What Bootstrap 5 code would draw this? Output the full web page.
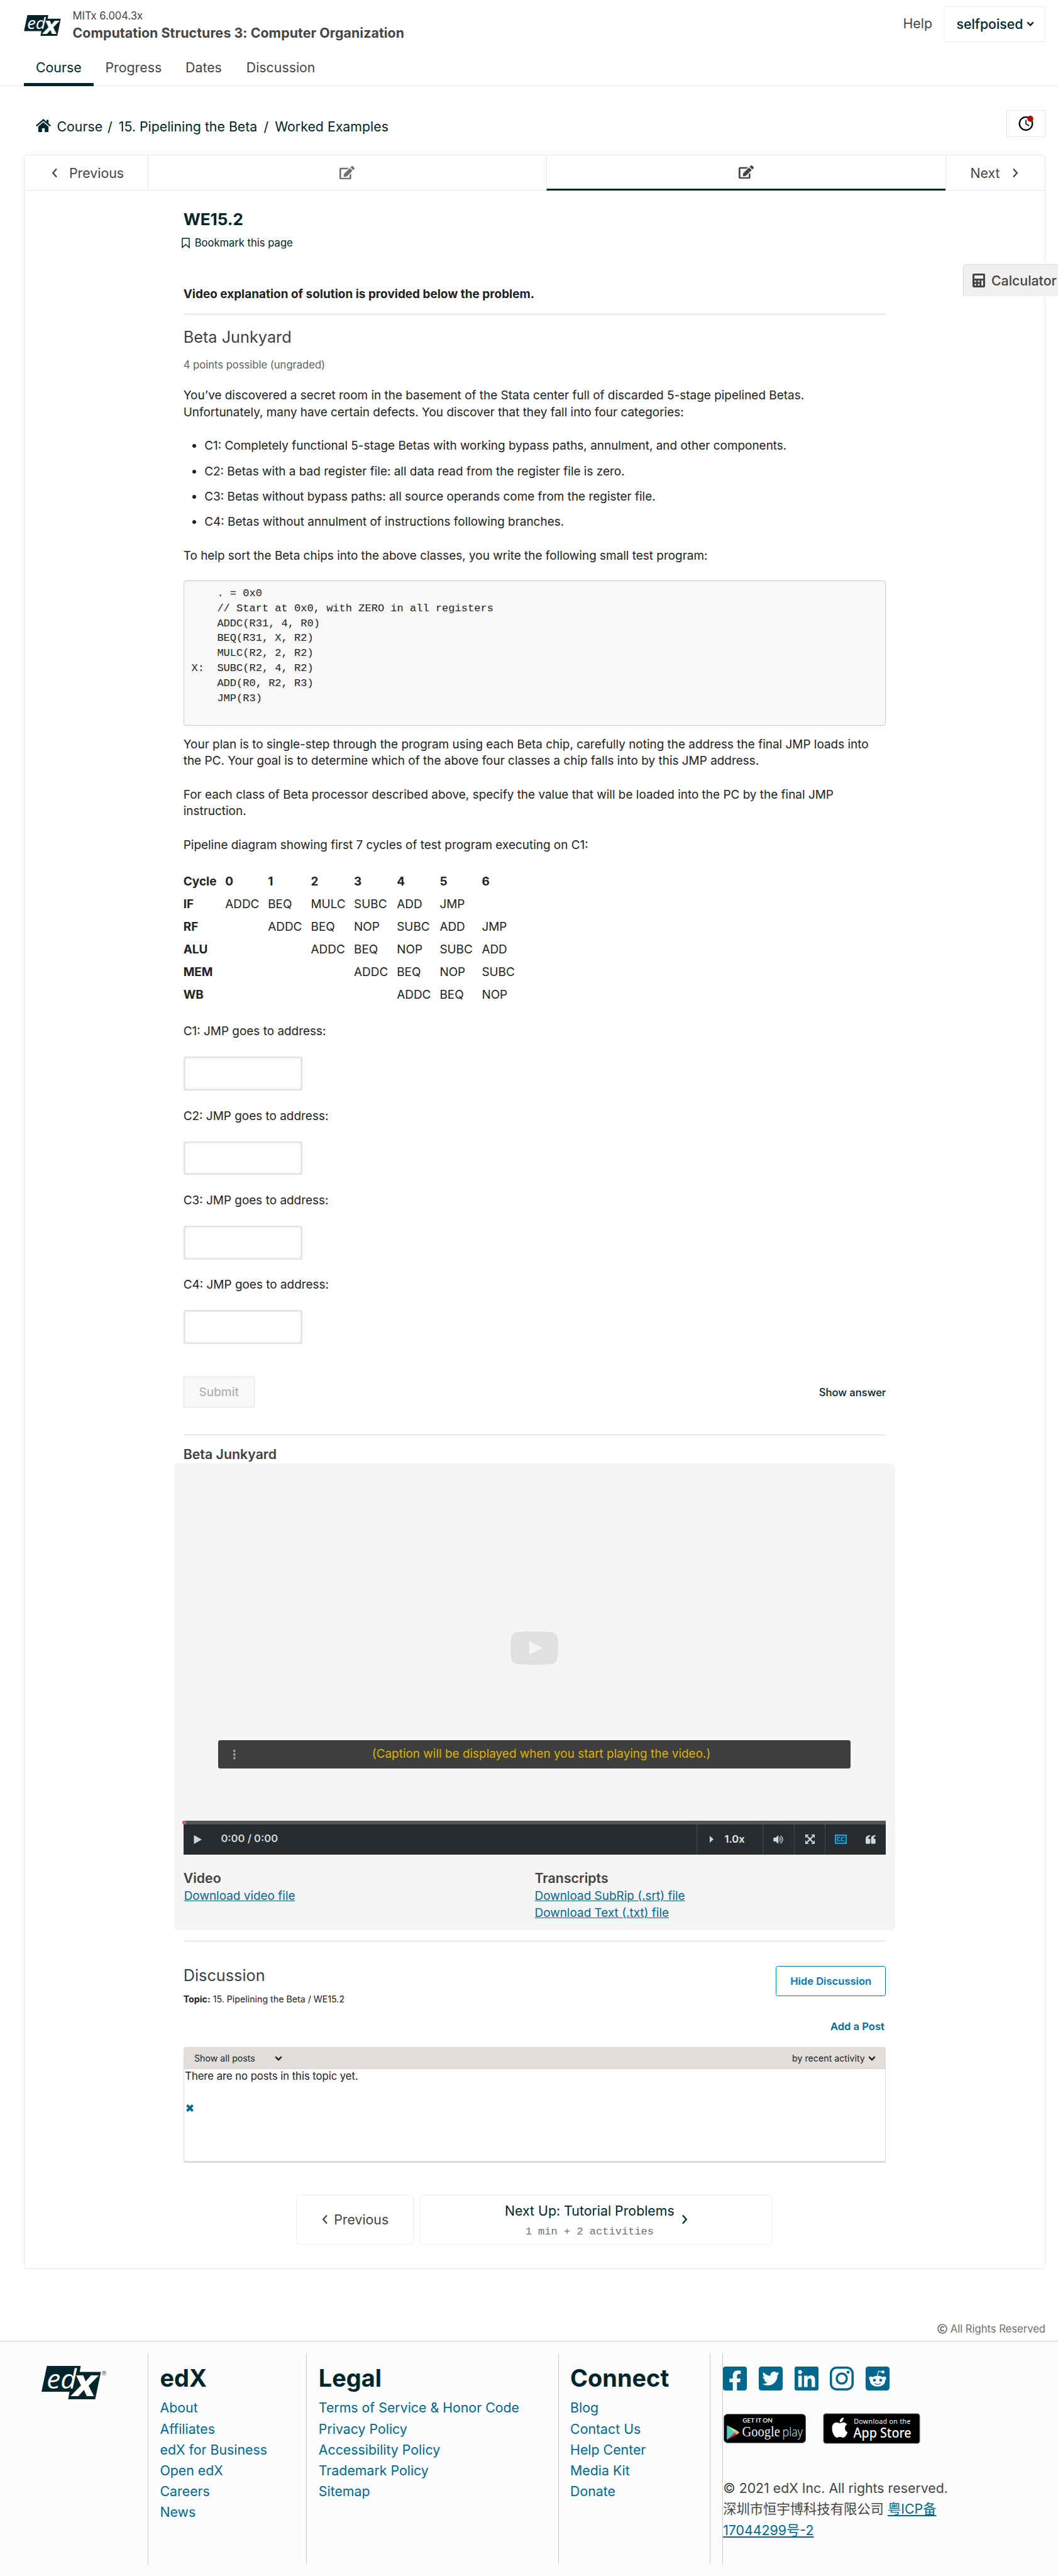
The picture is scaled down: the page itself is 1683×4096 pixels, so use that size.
<!DOCTYPE html>
<html lang="en">
<head>
<meta charset="utf-8">
<meta name="viewport" content="width=device-width, initial-scale=1">
<title>WE15.2 | Worked Examples | edX</title>
<link href="https://cdn.jsdelivr.net/npm/bootstrap@5.3.0/dist/css/bootstrap.min.css" rel="stylesheet">
<style>
:root{--ink:#00262b;--txt:#454545;--teal:#00688d;--line:#e7e7e7}
body{font-family:Inter,"Noto Sans CJK SC",sans-serif;font-size:18.95px;line-height:26.53px;color:#222;background:#fff;overflow-x:hidden;position:relative}
a{text-decoration:none;color:inherit}
svg{display:block;flex:none}
h1,h2,h3,p,ul{margin:0}
.topbar{height:137.4px;border-bottom:1px solid var(--line)}
.brandrow{height:77px;padding:0 20px 0 38px}
.crs{margin-left:18.5px}
.crs-num{font-size:16.58px;line-height:20px;margin-top:14.7px;color:var(--txt)}
.crs-title{font-size:21.32px;line-height:26px;margin-top:4px;font-weight:700;letter-spacing:.07px;color:var(--txt)}
.logo-s{margin-top:24px}
.help{font-size:21.32px;line-height:30px;color:var(--txt);margin:22.2px 18px 0 0}
.user{width:162px;height:57px;margin-top:9.5px;border:1px solid #ececec;font-size:21.32px;font-weight:500;color:var(--ink);gap:5px;padding-left:2px}
.tabs{padding-left:38px;height:60.4px}
.tabs a{font-size:21.32px;line-height:30px;padding:14.5px 18.95px 0;color:var(--txt);height:60.4px}
.tabs a:last-child{padding-left:20px}
.tabs a.on{color:var(--ink);border-bottom:5px solid var(--ink)}
.page{padding:37.9px 20px 0 38px}
.crumbs{font-size:21.32px;line-height:30px;color:var(--ink);padding:10.7px 0 0 18.9px;gap:10.1px;height:42.6px}
.clockbox{width:61.6px;height:42.6px;border:1px solid var(--line)}
.unit{margin-top:28.4px;height:3362.2px;border:1px solid var(--line);border-radius:4.7px}
.seq{height:56px;font-size:21.32px;color:var(--txt)}
.seq>*{border-bottom:1px solid var(--line)}
.seq .prv{width:195.6px;padding-left:43px;gap:18px}
.seq .nxt{width:158.5px;padding-left:39px;gap:19px;border-left:1px solid var(--line)}
.seq .tb{border-left:1px solid var(--line)}
.seq .tb.on{border-bottom:3px solid var(--ink)}
.col-main{width:1117.6px;margin:0 auto}
.unit h1{font-size:26.06px;line-height:32px;font-weight:700;color:var(--ink);margin-top:29.3px}
.bm{font-size:16.58px;line-height:24px;color:var(--ink);margin:9.8px 0 0 -3px;gap:8px}
.rule{height:1px;background:#d9d9d9}
.h-prob{font-size:25.27px;line-height:30px;font-weight:400;color:#3c4146}
.pts{font-size:16.58px;line-height:22px;margin-top:17.8px;color:#5e6469}
.cats{padding-left:33.5px;margin-top:26.9px}
.cats li{margin-bottom:13.74px}
.code{font-family:"Liberation Mono",monospace;font-size:17.05px;line-height:23.87px;background:#f8f8f8;border:1px solid #c8c8c8;border-radius:3.5px;height:231px;margin:26.4px 0 0;padding:7.4px 11.8px;color:#222;overflow:hidden}
.para{margin-top:26.8px}
.pipe{margin-top:27.3px;table-layout:fixed;width:540px;border-collapse:collapse}
.pipe th,.pipe td{height:36.06px;padding:0}
.pipe th{font-weight:700}
.ans{margin-top:26.5px}
.ans+.ans{margin-top:27.6px}
.ans input{display:block;width:189px;height:53.9px;border:2px solid #e0e0e0;border-radius:3.5px;box-shadow:inset 0 0 4px rgba(0,0,0,.12);margin-top:26.4px;background:#fff}
.actions{margin-top:52.2px}
.submit{width:113px;height:49px;border:1px solid #e2e2e2;background:#f9f9f9;color:#b1b1b1;font-size:18.95px;font-weight:500}
.show{font-size:16.58px;font-weight:500;color:var(--ink)}
.h-vid{font-size:21.32px;line-height:27px;font-weight:600;color:#414141}
.vid{margin:.7px -14.6px 0;height:741.5px;background:#f5f5f5;border-radius:6px;padding:0 14.6px}
.stage{height:567.4px;position:relative}
.stage .playbig{position:absolute;left:520.5px;top:267.2px}
.capt{position:absolute;left:55px;top:439.5px;width:1006.7px;height:45px;background:#3e3e3e;border-radius:3.5px;color:#d9b300;font-size:18.95px}
.capt svg{position:absolute;left:24px;top:15px}
.prog{height:6px;background:#4f595b;position:relative}
.prog i{position:absolute;left:-1.5px;top:0;width:6px;height:6px;border-radius:2px;background:#cb598d}
.ctl{height:48.6px;background:#282c2e;color:#cfd8dc;font-size:16.58px;font-weight:600}
.ctl .seg{border-left:1px dotted #62696b;height:48.6px}
.dl{font-size:18.95px;line-height:27.2px;padding-top:23.7px}
.dl a{color:var(--teal);text-decoration:underline;display:block}
.dl h3+a{margin-top:1.2px}
.btn-hide{width:175.3px;height:47.4px;border:1.2px solid #0075b4;border-radius:3.5px;color:#0075b4;font-size:16.58px;font-weight:600;background:#fff}
.topic{font-size:14.21px;line-height:20px;margin-top:12.7px}
.addp{font-size:16.58px;line-height:22px;font-weight:600;color:var(--teal);margin:22px 2.4px 0 0}
.posts{margin-top:22.3px;height:184.2px;border:1px solid #d9d9d9;border-bottom-width:3px;border-radius:3.5px;font-size:16.58px}
.posts .hd{height:33.6px;background:#e0dddb;border-bottom:1px solid #d9d9d9;font-size:14.21px;padding:1px 15.5px 0 16.2px}
.pager{margin:50.3px 0 0 179.7px;gap:8.9px;font-size:21.32px}
.nav-b{border:1px solid #ececec;border-radius:4.7px;height:79.3px}
.eta{font-family:"Liberation Mono",monospace;font-size:17.05px;line-height:28px;color:#707070;padding-top:4.7px;margin-bottom:-4.7px}
.rights{font-size:16.58px;line-height:22px;color:#707070;margin-top:84px;gap:5px}
.foot{position:relative;margin-top:8px;height:373px;border-top:1px solid #c8c8c8;background:#fcfcfc;padding-top:18.4px}
.foot .fc{height:335.2px;border-right:1px solid #c8c8c8;padding:16.5px 0 0 18.5px}
.foot h2{font-size:37.9px;line-height:46px;font-weight:700;color:var(--ink);margin-bottom:8px}
.foot .fc a{display:block;font-size:21.32px;line-height:33.16px;color:var(--teal);white-space:nowrap}
.soc{gap:18.7px;color:var(--teal);padding-top:21.4px}
.badges{gap:26.3px;margin-top:35.3px;padding-left:.8px}
.legal{font-size:21.32px;line-height:33.2px;color:var(--txt);margin-top:54.6px;width:400px}
.legal a{color:var(--teal);text-decoration:underline}
.calc{position:absolute;right:0;top:420.4px;width:150.6px;height:51px;background:#f0f0f0;border:1px solid #d9d9d9;border-right:0;border-bottom:0;border-radius:5px 0 0 0;font-size:21.32px;font-weight:500;color:var(--txt);padding-left:14px;gap:9.5px;white-space:nowrap}
</style>
</head>
<body>
<svg width="0" height="0" class="position-absolute">
<symbol id="edx" viewBox="22 22 160 90"><path fill="#00262b" d="M36.7 22H127.5L124.7 38H181.7L166.3 112H93.7L97.3 91.3H22z"/>
<text x="36" y="83" font-family="Open Sans" font-style="italic" font-size="71" fill="#fff" textLength="80" lengthAdjust="spacingAndGlyphs">ed</text>
<text x="106" y="103" font-family="Open Sans" font-style="italic" font-weight="700" font-size="103" fill="#fff" textLength="64" lengthAdjust="spacingAndGlyphs">x</text></symbol>
<symbol id="edit" viewBox="0 0 576 512"><path fill="currentColor" d="M402.6 83.2l90.2 90.2c3.8 3.8 3.8 10 0 13.8L274.4 405.6l-92.8 10.3c-12.4 1.4-22.9-9.1-21.5-21.5l10.3-92.8L388.8 83.2c3.8-3.8 10-3.8 13.8 0zm162-22.9l-48.8-48.8c-15.2-15.2-39.9-15.2-55.2 0l-35.4 35.4c-3.8 3.8-3.8 10 0 13.8l90.2 90.2c3.8 3.8 10 3.8 13.8 0l35.4-35.4c15.2-15.3 15.2-40 0-55.2zM384 346.2V448H64V128h229.8c3.2 0 6.2-1.3 8.5-3.5l40-40c7.6-7.6 2.2-20.5-8.5-20.5H48C21.5 64 0 85.5 0 112v352c0 26.5 21.5 48 48 48h352c26.5 0 48-21.5 48-48V306.2c0-10.7-12.9-16-20.5-8.5l-40 40c-2.2 2.3-3.5 5.3-3.5 8.5z"/></symbol>
<symbol id="chl" viewBox="0 0 10 16"><path d="M8 1.6 2.2 8 8 14.4" fill="none" stroke="currentColor" stroke-width="2.3"/></symbol>
<symbol id="chr" viewBox="0 0 10 16"><path d="M2 1.6 7.8 8 2 14.4" fill="none" stroke="currentColor" stroke-width="2.3"/></symbol>
<symbol id="chd" viewBox="0 0 12 8"><path d="M1.3 1.3 6 6.2l4.7-4.9" fill="none" stroke="currentColor" stroke-width="2.4"/></symbol>
</svg>
<header class="topbar">
<div class="brandrow d-flex">
<svg class="logo-s" width="59" height="33"><use href="#edx"/></svg>
<div class="crs flex-grow-1"><div class="crs-num">MITx 6.004.3x</div><div class="crs-title">Computation Structures 3: Computer Organization</div></div>
<div class="help">Help</div>
<div class="user d-flex align-items-center justify-content-center">selfpoised <svg width="12" height="8"><use href="#chd"/></svg></div>
</div>
<nav class="tabs d-flex"><a class="on" href="#">Course</a><a href="#">Progress</a><a href="#">Dates</a><a href="#">Discussion</a></nav>
</header>
<main class="page">
<div class="d-flex justify-content-between">
<div class="crumbs d-flex"><span class="d-flex" style="margin-right:-2.3px"><svg width="24" height="21" viewBox="0 0 24 21" style="margin:3px 9.6px 0 0"><path fill="#00262b" d="M12 0 0 10.5l1.5 1.8L12 3.2l10.5 9.1 1.5-1.8-3.8-3.3V1.5h-3.2v2.9zM12 5.2 3.9 12.2V20q0 1 1 1h5v-6h4.200v6h5q1 0 1-1v-7.800z"/></svg>Course</span><span>/</span><span>15. Pipelining the Beta</span><span>/</span><span>Worked Examples</span></div>
<div class="clockbox d-flex align-items-center justify-content-center"><svg width="25" height="25" viewBox="0 0 25 25"><circle cx="12" cy="12.5" r="10.3" fill="none" stroke="#000" stroke-width="2.3"/><path d="M12 6.5v6.5l5 3" fill="none" stroke="#000" stroke-width="1.6"/><circle cx="19" cy="4.8" r="4.8" fill="#ab0d02"/></svg></div>
</div>
<section class="unit">
<div class="seq d-flex">
<div class="prv d-flex align-items-center"><svg width="10" height="16"><use href="#chl"/></svg>Previous</div>
<div class="tb flex-fill d-flex align-items-center justify-content-center" style="color:#707070"><svg width="24" height="21.3"><use href="#edit"/></svg></div>
<div class="tb on flex-fill d-flex align-items-center justify-content-center"><svg width="24" height="21.3"><use href="#edit"/></svg></div>
<div class="nxt d-flex align-items-center">Next<svg width="10" height="16"><use href="#chr"/></svg></div>
</div>
<div class="col-main">
<h1>WE15.2</h1>
<div class="bm d-flex align-items-center"><svg width="13" height="17" viewBox="0 0 13 17"><path d="M1 1h11v14.5l-5.5-4.700-5.5 4.700z" fill="none" stroke="#00262b" stroke-width="1.5"/></svg>Bookmark this page</div>
<p class="fw-bold" style="margin-top:56.6px">Video explanation of solution is provided below the problem.</p>
<div class="rule" style="margin-top:17.5px"></div>
<h3 class="h-prob" style="margin-top:21.5px">Beta Junkyard</h3>
<div class="pts">4 points possible (ungraded)</div>
<p style="margin-top:25.2px">You’ve discovered a secret room in the basement of the Stata center full of discarded 5-stage pipelined Betas.<br>Unfortunately, many have certain defects. You discover that they fall into four categories:</p>
<ul class="cats"><li>C1: Completely functional 5-stage Betas with working bypass paths, annulment, and other components.</li><li>C2: Betas with a bad register file: all data read from the register file is zero.</li><li>C3: Betas without bypass paths: all source operands come from the register file.</li><li>C4: Betas without annulment of instructions following branches.</li></ul>
<p class="para">To help sort the Beta chips into the above classes, you write the following small test program:</p>
<pre class="code">    . = 0x0
    // Start at 0x0, with ZERO in all registers
    ADDC(R31, 4, R0)
    BEQ(R31, X, R2)
    MULC(R2, 2, R2)
X:  SUBC(R2, 4, R2)
    ADD(R0, R2, R3)
    JMP(R3)
</pre>
<p style="margin-top:16.4px">Your plan is to single-step through the program using each Beta chip, carefully noting the address the final JMP loads into<br>the PC. Your goal is to determine which of the above four classes a chip falls into by this JMP address.</p>
<p class="para">For each class of Beta processor described above, specify the value that will be loaded into the PC by the final JMP<br>instruction.</p>
<p class="para">Pipeline diagram showing first 7 cycles of test program executing on C1:</p>
<table class="pipe"><colgroup><col style="width:66.5px"><col style="width:68px"><col style="width:68.3px"><col style="width:68.5px"><col style="width:68.2px"><col style="width:68.2px"><col style="width:67px"><col></colgroup>
<tr><th>Cycle</th><th>0</th><th>1</th><th>2</th><th>3</th><th>4</th><th>5</th><th>6</th></tr>
<tr><th>IF</th><td>ADDC</td><td>BEQ</td><td>MULC</td><td>SUBC</td><td>ADD</td><td>JMP</td><td></td></tr>
<tr><th>RF</th><td></td><td>ADDC</td><td>BEQ</td><td>NOP</td><td>SUBC</td><td>ADD</td><td>JMP</td></tr>
<tr><th>ALU</th><td></td><td></td><td>ADDC</td><td>BEQ</td><td>NOP</td><td>SUBC</td><td>ADD</td></tr>
<tr><th>MEM</th><td></td><td></td><td></td><td>ADDC</td><td>BEQ</td><td>NOP</td><td>SUBC</td></tr>
<tr><th>WB</th><td></td><td></td><td></td><td></td><td>ADDC</td><td>BEQ</td><td>NOP</td></tr>
</table>
<div class="ans"><label for="a1">C1: JMP goes to address:</label><input id="a1"></div>
<div class="ans"><label for="a2">C2: JMP goes to address:</label><input id="a2"></div>
<div class="ans"><label for="a3">C3: JMP goes to address:</label><input id="a3"></div>
<div class="ans"><label for="a4">C4: JMP goes to address:</label><input id="a4"></div>
<div class="actions d-flex justify-content-between align-items-center"><button class="submit p-0" disabled>Submit</button><a class="show" href="#">Show answer</a></div>
<div class="rule" style="margin-top:42.4px"></div>
<h3 class="h-vid" style="margin-top:17.7px">Beta Junkyard</h3>
<div class="vid">
<div class="stage"><svg class="playbig" width="76" height="53.3" viewBox="0 0 76 53.3"><path fill="#e0e0e0" d="M10 1.5Q38-1.500 66 1.5 73.5 2.5 74.5 10 77.5 26.7 74.5 43.3 73.5 50.8 66 51.8 38 54.8 10 51.8 2.5 50.8 1.5 43.3-1.5 26.7 1.5 10 2.5 2.5 10 1.5z"/><path fill="#f5f5f5" d="M29.8 15.2v22l21-11z"/></svg>
<div class="capt d-flex align-items-center justify-content-center"><svg width="4" height="16"><g fill="#999"><rect width="3.5" height="4" rx="1"/><rect y="5.7" width="3.5" height="4" rx="1"/><rect y="11.4" width="3.5" height="4" rx="1"/></g></svg><span style="padding-left:22px">(Caption will be displayed when you start playing the video.)</span></div></div>
<div class="prog"><i></i></div>
<div class="ctl d-flex align-items-center">
<svg width="13" height="14" viewBox="0 0 13 14" style="margin-left:16.5px"><path fill="#cfd8dc" d="M.5 0v14L13 7z"/></svg><span class="flex-grow-1" style="margin-left:30.2px;padding-bottom:3px">0:00 / 0:00</span>
<div class="seg d-flex align-items-center" style="width:105.4px;padding-left:20.5px"><svg width="6" height="11"><path fill="#cfd8dc" d="M0 0v11l6-5.5z"/></svg><span style="margin-left:17.5px;padding-bottom:1px;color:#e7ecee">1.0x</span></div>
<div class="seg d-flex align-items-center justify-content-center" style="width:49.8px"><svg width="17" height="14" viewBox="0 0 27 23" fill="none" stroke="#cfd8dc" stroke-width="1.7"><path fill="#cfd8dc" stroke="none" d="M0 8q0-1.500 1.500-1.500H6L12 1q1-.8 1 .5v20q0 1.300-1 .5L6 16.500H1.500Q0 16.500 0 15z"/><path d="M15 8q4 3.500 0 7M16.500 4.500q8 7 0 14M18.500 1q12.500 10.500 0 21"/></svg></div>
<div class="seg d-flex align-items-center justify-content-center" style="width:49.6px"><svg width="15" height="15" viewBox="0 0 15 15"><path d="M3 3l9 9M12 3l-9 9" stroke="#cfd8dc" stroke-width="2.2"/><path fill="#cfd8dc" d="M0 0h5.700L0 5.700zM15 0v5.700L9.300 0zM0 15V9.300L5.700 15zM15 15H9.300L15 9.300z"/></svg></div>
<div class="seg d-flex align-items-center" style="width:97px;padding-left:15px;gap:30px"><svg width="19" height="15" viewBox="0 0 19 15"><path fill="#0ea6ec" d="M0 0h19v15H0z"/><rect x="2" y="2" width="15" height="11" rx="2" fill="#282c2e"/><path d="M8.600 5.700Q7.800 4.300 6.200 4.300 4 4.300 4 7.400t2.200 3.100q1.700 0 2.400-1.400M15 5.700q-.8-1.400-2.400-1.400-2.200 0-2.200 3.100t2.200 3.100q1.700 0 2.400-1.400" fill="none" stroke="#0ea6ec" stroke-width="1.7"/></svg>
<svg width="16" height="14" viewBox="0 0 16 14"><path id="q" fill="#cfd8dc" d="M7.200 0v2Q4.300 2 4.300 5v.700h1.500q1.400 0 1.400 1.400v5.200q0 1.400-1.400 1.400H1.400Q0 13.700 0 12.300V5.500Q.2.200 7.200 0z"/><use href="#q" x="8.5"/></svg></div>
</div>
<div class="row g-0 dl"><div class="col-6"><h3 class="h-vid">Video</h3><a href="#" style="padding-left:1px">Download video file</a></div><div class="col-6"><h3 class="h-vid">Transcripts</h3><a href="#">Download SubRip (.srt) file</a><a href="#">Download Text (.txt) file</a></div></div>
</div>
<div class="rule" style="margin-top:17.5px"></div>
<div class="d-flex justify-content-between" style="margin-top:39px"><div><h3 class="h-prob">Discussion</h3><div class="topic"><b>Topic:</b> 15. Pipelining the Beta / WE15.2</div></div><button class="btn-hide p-0">Hide Discussion</button></div>
<div class="addp text-end">Add a Post</div>
<div class="posts">
<div class="hd d-flex align-items-center"><span style="width:128.6px">Show all posts</span><svg width="12" height="8"><use href="#chd"/></svg><span class="ms-auto" style="margin-right:5px">by recent activity</span><svg width="12" height="8"><use href="#chd"/></svg></div>
<div style="padding-left:1.5px;line-height:23px">There are no posts in this topic yet.</div>
<svg width="12" height="12" viewBox="0 0 12 12" style="margin:33.5px 0 0 3px"><path d="M1.4 1.4l9.200 9.200M10.600 1.400l-9.200 9.200" stroke="#00688d" stroke-width="4"/></svg>
</div>
<div class="pager d-flex">
<div class="nav-b d-flex align-items-center justify-content-center" style="width:187.1px;gap:9.5px;color:#454545"><svg width="10" height="16"><use href="#chl"/></svg>Previous</div>
<div class="nav-b d-flex align-items-center justify-content-center" style="width:562px;gap:11px;color:#00262b"><div class="text-center"><div style="line-height:30px">Next Up: Tutorial Problems</div><div class="eta">1 min + 2 activities</div></div><svg width="10" height="16"><use href="#chr"/></svg></div>
</div>
</div>
</section>
<div class="rights d-flex justify-content-end align-items-center"><svg width="16" height="16" viewBox="0 0 16 16" fill="none" stroke="#707070"><circle cx="8" cy="8" r="7" stroke-width="1.7"/><path d="M10.800 6.200Q10 4.600 8.200 4.600 5.200 4.600 5.200 8t3 3.400q1.800 0 2.600-1.600" stroke-width="1.9"/></svg>All Rights Reserved</div>
</main>
<footer class="foot d-flex">
<div class="fc" style="width:236px;padding:20px 0 0 66.3px"><div class="d-flex"><svg width="94.7" height="53.3"><use href="#edx"/></svg><svg width="7" height="7" viewBox="0 0 10 10" style="margin:8px 0 0 1.5px"><circle cx="5" cy="5" r="4.4" fill="none" stroke="#00262b" stroke-width=".8"/><text x="2.9" y="7.3" font-family="Inter" font-size="6.5" fill="#00262b">R</text></svg></div></div>
<div class="fc" style="width:252.3px"><h2>edX</h2><a href="#">About</a><a href="#">Affiliates</a><a href="#">edX for Business</a><a href="#">Open edX</a><a href="#">Careers</a><a href="#">News</a></div>
<div class="fc" style="width:400.3px"><h2>Legal</h2><a href="#">Terms of Service &amp; Honor Code</a><a href="#">Privacy Policy</a><a href="#">Accessibility Policy</a><a href="#">Trademark Policy</a><a href="#">Sitemap</a></div>
<div class="fc" style="width:241.6px"><h2>Connect</h2><a href="#">Blog</a><a href="#">Contact Us</a><a href="#">Help Center</a><a href="#">Media Kit</a><a href="#">Donate</a></div>
<div class="fc p-0" style="width:20px"></div>
<div>
<div class="soc d-flex">
<svg width="38" height="38" viewBox="0 32 448 448"><path fill="currentColor" d="M400 32H48A48 48 0 0 0 0 80v352a48 48 0 0 0 48 48h137.250V327.690h-63V256h63v-54.640c0-62.150 37-96.480 93.670-96.480 27.140 0 55.520 4.840 55.520 4.840v61h-31.270c-30.810 0-40.420 19.120-40.420 38.730V256h68.780l-11 71.690h-57.780V480H400a48 48 0 0 0 48-48V80a48 48 0 0 0-48-48z"/></svg>
<svg width="38" height="38" viewBox="0 32 448 448"><path fill="currentColor" d="M400 32H48C21.500 32 0 53.500 0 80v352c0 26.500 21.500 48 48 48h352c26.500 0 48-21.500 48-48V80c0-26.500-21.500-48-48-48zm-48.900 158.800c.2 2.800.2 5.700.2 8.500 0 86.700-66 186.600-186.600 186.600-37.200 0-71.700-10.800-100.700-29.400 5.300.6 10.400.8 15.800.8 30.700 0 58.900-10.400 81.400-28-28.800-.6-53-19.500-61.300-45.500 10.100 1.500 19.200 1.500 29.600-1.200-30-6.100-52.500-32.500-52.500-64.400v-.8c8.700 4.900 18.900 7.900 29.600 8.300a65.447 65.447 0 0 1-29.200-54.600c0-12.200 3.200-23.400 8.900-33.100 32.300 39.800 80.800 65.800 135.200 68.600-9.300-44.500 24-80.600 64-80.600 18.900 0 35.900 7.900 47.900 20.700 14.800-2.800 29-8.300 41.600-15.800-4.900 15.200-15.200 28-28.800 36.100 13.200-1.400 26-5.100 37.800-10.200-8.900 13.100-20.100 24.700-32.900 34z"/></svg>
<svg width="38" height="38" viewBox="0 32 448 448"><path fill="currentColor" d="M416 32H31.900C14.300 32 0 46.500 0 64.300v383.400C0 465.500 14.300 480 31.900 480H416c17.600 0 32-14.500 32-32.300V64.300c0-17.800-14.400-32.300-32-32.300zM135.400 416H69V202.200h66.500V416zm-33.200-243c-21.300 0-38.500-17.300-38.500-38.500S80.900 96 102.200 96c21.200 0 38.500 17.300 38.500 38.500 0 21.300-17.200 38.500-38.500 38.500zm282.100 243h-66.400V312c0-24.800-.5-56.700-34.500-56.700-34.600 0-39.900 27-39.900 54.900V416h-66.400V202.200h63.700v29.200h.9c8.900-16.800 30.600-34.500 62.900-34.500 67.200 0 79.700 44.300 79.700 101.900V416z"/></svg>
<svg width="38" height="38" viewBox="0 0 64 64" fill="none" stroke="currentColor"><rect x="3" y="3" width="58" height="58" rx="15" stroke-width="6"/><circle cx="32" cy="32" r="13.500" stroke-width="5.800"/><circle cx="49" cy="15" r="4" fill="currentColor" stroke="none"/></svg>
<svg width="38" height="38" viewBox="0 0 64 64"><rect width="64" height="64" rx="7" fill="currentColor"/><g fill="#fff"><ellipse cx="32" cy="39" rx="20" ry="14.500"/><circle cx="14" cy="31.500" r="5"/><circle cx="50" cy="31.500" r="5"/><circle cx="46.500" cy="14.500" r="4"/></g><path d="M31.500 25l3-13 11 2.500" fill="none" stroke="#fff" stroke-width="1.800"/><circle cx="23.500" cy="36.500" r="4" fill="currentColor"/><circle cx="40.500" cy="36.500" r="4" fill="currentColor"/><path d="M24 45q8 5.500 16 0" fill="none" stroke="currentColor" stroke-width="2"/></svg>
</div>
<div class="badges d-flex align-items-center">
<svg width="131.3" height="47" viewBox="0 0 222 79"><rect x=".7" y=".7" width="220.6" height="77.6" rx="10" fill="#000" stroke="#8a8a8a" stroke-width="1.4"/><path fill="#30b9ce" d="M9 31v39l22-19z"/><path fill="#6ce5a8" d="M9 31l22 20-22 19z" opacity=".45"/><path fill="#b7e68c" d="M9 31l26 13-5 7z"/><path fill="#f7b25c" d="M35 44l8 6-8 6-5-5z"/><path fill="#e0264f" d="M9 70l26-14-5-5z"/><text x="51" y="23" font-family="Lato" font-weight="700" font-size="17" fill="#e6e6e6" textLength="81" lengthAdjust="spacingAndGlyphs">GET IT ON</text><text x="50" y="61" font-family="Liberation Serif" font-size="38" fill="#eee" textLength="102" lengthAdjust="spacingAndGlyphs">Google</text><text x="158" y="61" font-family="Open Sans" font-weight="300" font-size="34" fill="#eee" textLength="55" lengthAdjust="spacingAndGlyphs">play</text></svg>
<svg width="155" height="49" viewBox="0 0 262 83"><rect x="1" y="1" width="260" height="81" rx="7" fill="#000" stroke="#a6a6a6" stroke-width="2"/><svg x="24" y="12" width="42" height="54" viewBox="4 32 376 448" preserveAspectRatio="none"><path fill="#fff" d="M318.700 268.700c-.2-36.700 16.400-64.400 50-84.800-18.800-26.900-47.200-41.700-84.700-44.600-35.500-2.800-74.300 20.700-88.500 20.700-15 0-49.400-19.700-76.400-19.700C63.300 141.200 4 184.800 4 273.500q0 39.300 14.400 81.200c12.800 36.700 59 126.700 107.200 125.200 25.200-.6 43-17.900 75.800-17.900 31.800 0 48.300 17.900 76.400 17.900 48.600-.7 90.400-82.500 102.600-119.300-65.200-30.700-61.700-90-61.700-91.900zm-56.600-164.200c27.300-32.400 24.800-61.900 24-72.500-24.100 1.400-52 16.400-67.900 34.900-17.500 19.800-27.800 44.300-25.600 71.900 26.100 2 49.900-11.400 69.500-34.300z"/></svg><text x="83" y="28" font-family="Noto Sans" font-size="18" fill="#fff" textLength="153" lengthAdjust="spacing">Download on the</text><text x="82" y="66" font-family="Noto Sans" font-weight="500" font-size="37" fill="#fff" textLength="156" lengthAdjust="spacingAndGlyphs">App Store</text></svg>
</div>
<div class="legal" lang="zh-CN">© 2021 edX Inc. All rights reserved.<br>深圳市恒宇博科技有限公司 <a href="#">粤ICP备<br>17044299号-2</a></div>
</div>
</footer>
<div class="calc d-flex align-items-center"><svg width="20" height="22" viewBox="0 0 20 22"><rect width="20" height="22" rx="2" fill="#454545"/><path fill="#f0f0f0" d="M3 3h14v5H3zM3.200 11h2.600v2.600H3.200zM8.700 11h2.600v2.600H8.700zM14.200 11h2.600v8h-2.600zM3.200 16.400h2.600V19H3.200zM8.700 16.400h2.600V19H8.700z"/></svg>Calculator</div>
<script src="https://cdn.jsdelivr.net/npm/bootstrap@5.3.0/dist/js/bootstrap.bundle.min.js"></script>
</body>
</html>
